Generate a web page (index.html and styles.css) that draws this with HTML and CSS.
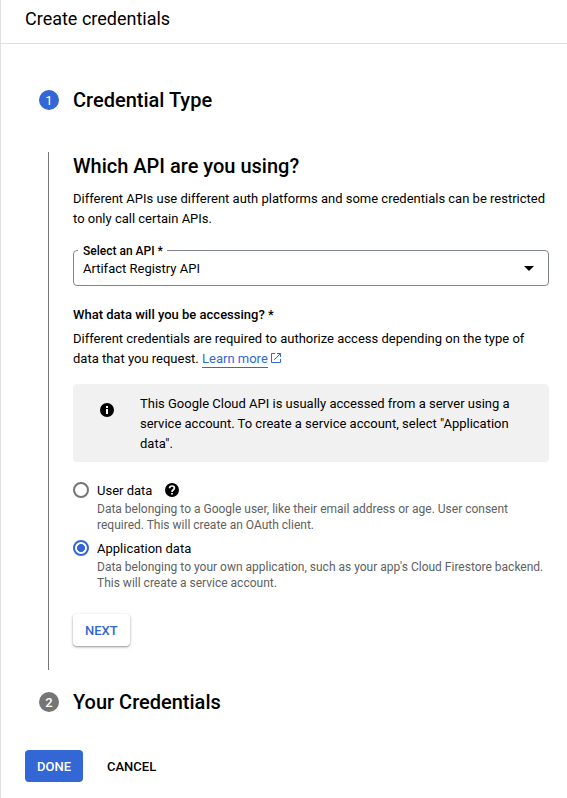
FILE: index.html
```html
<!DOCTYPE html>
<html lang="en">
<head>
<meta charset="utf-8">
<title>Create credentials</title>
<link rel="stylesheet" href="styles.css">
</head>
<body>
<div class="panel">
  <header class="panel-header">Create credentials</header>
  <main class="stepper">
    <div class="step-header">
      <span class="step-number step-number-active">1</span>
      <h2 class="step-title">Credential Type</h2>
    </div>
    <section class="step-body">
      <h3 class="question">Which API are you using?</h3>
      <p class="text">Different APIs use different auth platforms and some credentials can be restricted to only call certain APIs.</p>
      <div class="select">
        <span class="select-label">Select an API *</span>
        <span class="select-value">Artifact Registry API</span>
        <svg class="select-arrow" width="10" height="5" viewBox="0 0 10 5"><path d="M0 0h10L5 5z"/></svg>
      </div>
      <h4 class="field-title">What data will you be accessing? *</h4>
      <p class="text">Different credentials are required to authorize access depending on the type of data that you request. <a class="link" href="#">Learn more</a><svg class="external" width="10" height="10" viewBox="0 0 10 10"><path d="M4.2.5H.5v9h9V5.8M6 .5h3.500V4M9.300.7 3.200 6.800"/></svg></p>
      <div class="notice">
        <svg class="notice-icon" width="14" height="14" viewBox="0 0 14 14"><circle cx="7" cy="7" r="7"/><path fill="#fff" d="M6 3h2v2H6zM6 6h2v5H6z"/></svg>
        <p class="text notice-text">This Google Cloud API is usually accessed from a server using a service account. To create a service account, select "Application data".</p>
      </div>
      <div class="option">
        <span class="radio"></span>
        <div>
          <div class="option-title">User data
            <svg class="help" width="14" height="14" viewBox="0 0 14 14"><circle cx="7" cy="7" r="7"/><path fill="none" stroke="#fff" stroke-width="1.700" d="M4.600 5.300C4.600 3.900 5.600 3 7 3s2.400.8 2.400 2.100C9.400 6.700 7 6.800 7 8.900"/><path fill="#fff" d="M6.100 9.900h1.800v1.600H6.100z"/></svg>
          </div>
          <p class="option-text">Data belonging to a Google user, like their email address or age. User consent required. This will create an OAuth client.</p>
        </div>
      </div>
      <div class="option">
        <span class="radio radio-checked"></span>
        <div>
          <div class="option-title">Application data</div>
          <p class="option-text">Data belonging to your own application, such as your app's Cloud Firestore backend. This will create a service account.</p>
        </div>
      </div>
      <button class="button button-raised">NEXT</button>
    </section>
    <div class="step-header">
      <span class="step-number">2</span>
      <h2 class="step-title">Your Credentials</h2>
    </div>
  </main>
  <footer class="actions">
    <button class="button button-primary">DONE</button>
    <button class="button">CANCEL</button>
  </footer>
</div>
</body>
</html>
```
FILE: styles.css
```css
* { box-sizing: border-box; }

body {
  margin: 0;
  background: #fff;
  color: #000;
  font-family: Roboto, sans-serif;
  font-size: 13px;
}

h2, h3, h4, p { margin: 0; }

.panel {
  height: 798px;
  border-left: 1px solid #e0e0e0;
  overflow: hidden;
}

.panel-header {
  height: 44px;
  padding: 7px 24px 0;
  border-bottom: 1px solid #e0e0e0;
  font-size: 18px;
  line-height: 24px;
}

.stepper { padding: 44px 18px 0 38px; }

.step-header {
  display: flex;
  align-items: center;
  gap: 14px;
  height: 24px;
}

.step-number {
  width: 20px;
  height: 20px;
  border-radius: 50%;
  background: #757575;
  color: #fff;
  font-size: 13px;
  font-weight: 500;
  line-height: 21px;
  text-align: center;
}

.step-number-active {
  background: #3367d6;
  font-weight: 400;
}

.step-title, .question {
  font-size: 20px;
  font-weight: 500;
  line-height: 28px;
}

.step-body {
  height: 518px;
  margin: 40px 0 20px 9px;
  padding-left: 24px;
  border-left: 1px solid #757575;
}

.text { line-height: 20px; }

.question { margin-bottom: 9px; }

.select {
  position: relative;
  display: flex;
  align-items: center;
  justify-content: space-between;
  height: 36px;
  margin: 21px 0 19px;
  padding: 0 14px 0 9px;
  border: 1px solid #80868b;
  border-radius: 4px;
}

.select-label {
  position: absolute;
  top: -8px;
  left: 4px;
  padding: 0 4px 0 5px;
  background: #fff;
  font-size: 12px;
  font-weight: 500;
  line-height: 16px;
}

.field-title {
  margin-bottom: 4px;
  font-size: 13px;
  font-weight: 500;
  line-height: 20px;
}

.link {
  padding-bottom: 1px;
  border-bottom: 1px solid #3367d6;
  color: #3367d6;
  text-decoration: none;
}

.external {
  margin-left: 3px;
  fill: none;
  stroke: #3367d6;
}

.notice {
  display: flex;
  gap: 26px;
  height: 78px;
  margin: 15px 0 20px;
  padding: 10px 27px 0;
  border-radius: 4px;
  background: #f1f1f1;
}

.notice-icon { flex: none; margin-top: 9px; }

.option {
  display: flex;
  gap: 8px;
  height: 58px;
}

.radio {
  flex: none;
  width: 16px;
  height: 16px;
  border: 2px solid #757575;
  border-radius: 50%;
}

.radio-checked {
  border-color: #3367d6;
  background: radial-gradient(circle, #3367d6 3.7px, #fff 4.300px);
}

.option-title {
  display: flex;
  align-items: center;
  gap: 12.600px;
  height: 16px;
  margin-bottom: 3px;
}

.option-text {
  color: #616161;
  font-size: 12px;
  line-height: 16px;
}

.button {
  height: 32px;
  padding: 1px 12px 0;
  border: 0;
  border-radius: 4px;
  background: none;
  color: #000;
  font: 500 13px/31px Roboto, sans-serif;
}

.button-raised {
  display: block;
  margin-top: 16px;
  color: #3367d6;
  box-shadow: 0 1px 2px rgba(0, 0, 0, 0.34), 0 1px 4px rgba(0, 0, 0, 0.12);
}

.button-primary {
  background: #3367d6;
  color: #fff;
}

.actions {
  display: flex;
  gap: 12px;
  padding: 36px 24px;
}
```
